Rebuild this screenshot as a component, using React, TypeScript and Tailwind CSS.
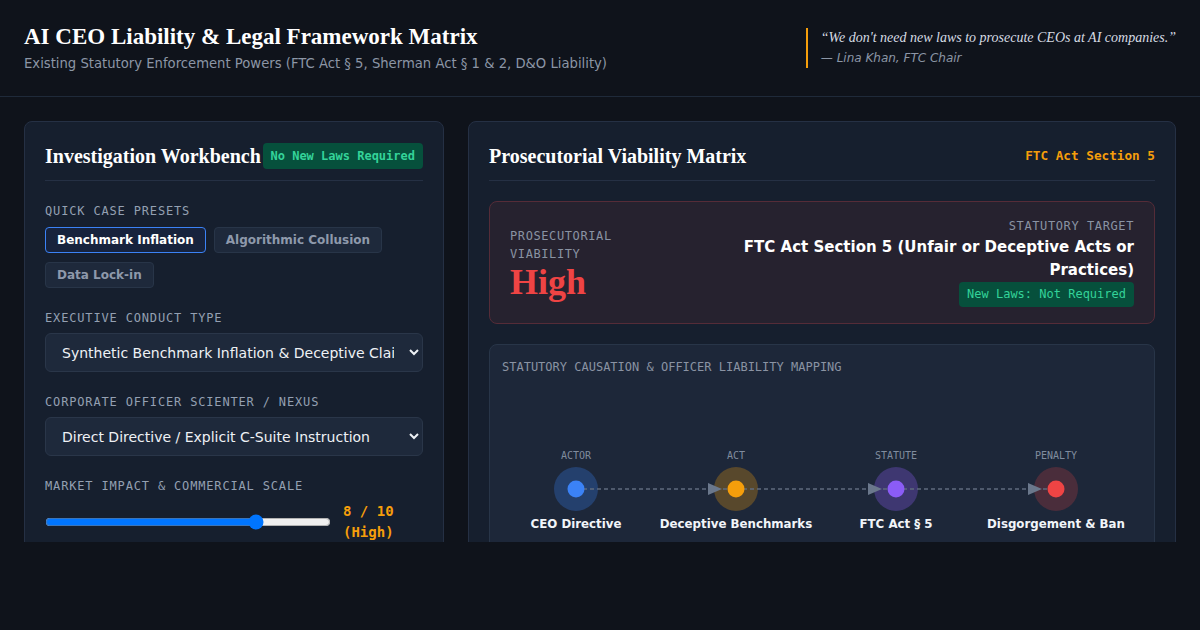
import { useState } from "react";

const serif = "font-['Liberation_Serif',serif]";
const sans = "font-['DejaVu_Sans',sans-serif]";
const mono = "font-['DejaVu_Sans_Mono',monospace]";

const presets = ["Benchmark Inflation", "Algorithmic Collusion", "Data Lock-in"];

const nodes = [
  { x: 74, tag: "ACTOR", name: "CEO Directive", halo: "rgba(59,130,246,0.28)", dot: "#3b82f6" },
  { x: 234, tag: "ACT", name: "Deceptive Benchmarks", halo: "rgba(245,158,11,0.28)", dot: "#f59e0b" },
  { x: 394, tag: "STATUTE", name: "FTC Act § 5", halo: "rgba(139,92,246,0.3)", dot: "#8b5cf6" },
  { x: 554, tag: "PENALTY", name: "Disgorgement & Ban", halo: "rgba(239,68,68,0.22)", dot: "#ef4444" },
];

function Label({ children }: { children: React.ReactNode }) {
  return (
    <div className={`${mono} text-[12px] leading-4 tracking-[0.07em] text-[#94a0b2] uppercase`}>
      {children}
    </div>
  );
}

export default function App() {
  const [preset, setPreset] = useState("Benchmark Inflation");
  const [scale, setScale] = useState(8);

  return (
    <div className={`${sans} h-[630px] w-[1200px] bg-[#0f131b] text-white overflow-hidden`}>
      {/* Header */}
      <header className="h-[97px] px-6 flex items-center justify-between border-b border-[#1f2a3a]">
        <div>
          <h1 className={`${serif} text-[23px] leading-[28px] font-bold text-white`}>
            AI CEO Liability &amp; Legal Framework Matrix
          </h1>
          <p className="mt-1 text-[13.2px] leading-[18px] text-[#8c96a6]">
            Existing Statutory Enforcement Powers (FTC Act § 5, Sherman Act § 1 &amp; 2, D&amp;O Liability)
          </p>
        </div>
        <div className="border-l-2 border-[#f59e0b] pl-[13px] -mt-px">
          <div className={`${serif} italic text-[14px] leading-5 text-[#d6dbe3]`}>
            “We don't need new laws to prosecute CEOs at AI companies.”
          </div>
          <div className="italic text-[12px] leading-5 text-[#8c96a6]">— Lina Khan, FTC Chair</div>
        </div>
      </header>

      {/* Main */}
      <main className="h-[445px] overflow-hidden px-6 pt-6 grid grid-cols-[420px_1fr] gap-6 items-start">
        {/* Left card */}
        <section className="bg-[#161f2e] border border-[#253044] rounded-lg p-5 pb-8">
          <div className="flex items-center justify-between pb-[10px] border-b border-[#253044]">
            <h2 className={`${serif} text-[20px] leading-[28px] font-bold whitespace-nowrap`}>
              Investigation Workbench
            </h2>
            <span className={`${mono} font-bold text-[12px] leading-4 px-2 py-[5px] rounded bg-[#06503c] text-[#34d399] whitespace-nowrap`}>
              No New Laws Required
            </span>
          </div>

          <div className="mt-[22px]">
            <Label>Quick Case Presets</Label>
            <div className="mt-2 flex flex-wrap gap-x-2 gap-y-[9px]">
              {presets.map((p) => (
                <button
                  key={p}
                  onClick={() => setPreset(p)}
                  className={`px-[11px] py-1 text-[12px] leading-4 font-bold rounded border ${
                    preset === p
                      ? "bg-[#17233d] border-[#3b82f6] text-white"
                      : "bg-[#1e293b] border-[#283548] text-[#8e99ab]"
                  }`}
                >
                  {p}
                </button>
              ))}
            </div>
          </div>

          <div className="mt-[22px]">
            <Label>Executive Conduct Type</Label>
            <select className="mt-[7px] w-full h-[39px] px-3 rounded-md bg-[#1e293b] border border-[#2a3649] text-[14px] text-[#eef1f5]">
              <option>Synthetic Benchmark Inflation &amp; Deceptive Claims</option>
            </select>
          </div>

          <div className="mt-[22px]">
            <Label>Corporate Officer Scienter / Nexus</Label>
            <select className="mt-[7px] w-full h-[39px] px-3 rounded-md bg-[#1e293b] border border-[#2a3649] text-[14px] text-[#eef1f5]">
              <option>Direct Directive / Explicit C-Suite Instruction</option>
            </select>
          </div>

          <div className="mt-[22px]">
            <Label>Market Impact &amp; Commercial Scale</Label>
            <div className="mt-[7px] flex items-center gap-3">
              <input
                type="range"
                min={2}
                max={10}
                value={scale}
                onChange={(e) => setScale(Number(e.target.value))}
                className="flex-1 min-w-0"
              />
              <span className={`${mono} w-20 font-bold text-[14px] leading-[21px] text-[#f59e0b]`}>
                {scale} / 10 (High)
              </span>
            </div>
          </div>
        </section>

        {/* Right card */}
        <section className="bg-[#161f2e] border border-[#253044] rounded-lg p-5 pb-8">
          <div className="flex items-center justify-between pb-[10px] border-b border-[#253044]">
            <h2 className={`${serif} text-[20px] leading-[28px] font-bold`}>Prosecutorial Viability Matrix</h2>
            <span className={`${mono} font-bold text-[12.7px] text-[#f59e0b]`}>FTC Act Section 5</span>
          </div>

          <div className="mt-5 px-5 py-4 rounded-lg border border-[#552c38] bg-[#26222f] flex items-center justify-between gap-4">
            <div className="w-min pt-[3px]">
              <div className={`${mono} text-[12px] leading-[18px] tracking-wider text-[#8a93a3] uppercase`}>
                Prosecutorial Viability
              </div>
              <div className={`${serif} text-[36px] leading-[38px] font-bold text-[#ef4444]`}>High</div>
            </div>
            <div className="max-w-[400px] flex flex-col items-end text-right">
              <div className={`${mono} text-[12px] leading-4 tracking-wider text-[#8a93a3] uppercase`}>
                Statutory Target
              </div>
              <div className="mt-[2px] text-[15px] leading-[23px] font-bold text-white">
                FTC Act Section 5 (Unfair or Deceptive Acts or Practices)
              </div>
              <span className={`${mono} px-2 py-1 text-[12px] leading-[17px] rounded bg-[#06503c] text-[#34d399]`}>
                New Laws: Not Required
              </span>
            </div>
          </div>

          <div className="mt-5 px-3 pt-[14px] pb-3 rounded-lg border border-[#283548] bg-[#1d2739]">
            <div className={`${mono} text-[12px] leading-4 text-[#8a93a3] uppercase`}>
              Statutory Causation &amp; Officer Liability Mapping
            </div>
            <svg width="640" height="190" className="block">
              {nodes.map((n) => (
                <circle key={n.tag + "h"} cx={n.x} cy={114} r={22} fill={n.halo} />
              ))}
              {nodes.slice(0, -1).map((n, i) => {
                const nx = nodes[i + 1].x;
                return (
                  <g key={n.tag + "l"}>
                    <line x1={n.x} y1={114} x2={nx} y2={114} stroke="#5f6b7e" strokeWidth={1.5} strokeDasharray="4 3" />
                    <polygon points={`${nx - 28},108 ${nx - 14},114 ${nx - 28},120`} fill="#6b788c" />
                  </g>
                );
              })}
              {nodes.map((n) => (
                <g key={n.tag}>
                  <circle cx={n.x} cy={114} r={8.5} fill={n.dot} />
                  <text
                    x={n.x}
                    y={84}
                    textAnchor="middle"
                    fontSize={10}
                    fill="#808c9e"
                    fontFamily="'DejaVu Sans Mono', monospace"
                  >
                    {n.tag}
                  </text>
                  <text
                    x={n.x}
                    y={153}
                    textAnchor="middle"
                    fontSize={11.8}
                    fontWeight={700}
                    fill="#f1f5f9"
                    fontFamily="'DejaVu Sans', sans-serif"
                  >
                    {n.name}
                  </text>
                </g>
              ))}
            </svg>
          </div>
        </section>
      </main>
    </div>
  );
}
